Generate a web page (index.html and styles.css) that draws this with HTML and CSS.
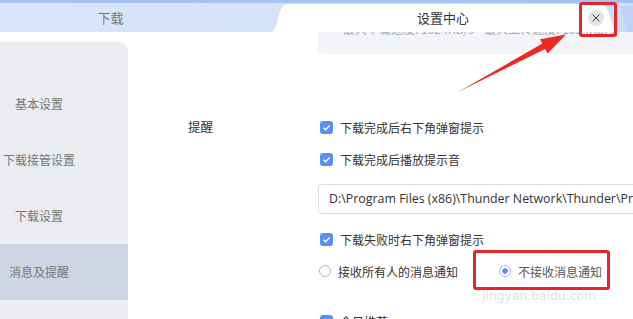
FILE: index.html
```html
<!DOCTYPE html>
<html>
<head lang="zh-CN">
    <meta charset="UTF-8">
    <title>设置中心</title>
    <link rel="stylesheet" href="styles.css">
</head>
<body>
<div class="tabs">
    <div class="tab">下载</div>
    <div class="tab tab-active">
        <span>设置中心</span>
        <i class="close">
            <svg width="8" height="8" viewBox="0 0 8 8"><path d="M0.5 0.5L7.5 7.5M7.5 0.5L0.5 7.5" stroke="#444" stroke-width="1"/></svg>
        </i>
    </div>
    <div class="tab-more"></div>
</div>
<div class="page">
    <ul class="side">
        <li>基本设置</li>
        <li>下载接管设置</li>
        <li>下载设置</li>
        <li class="selected">消息及提醒</li>
        <li></li>
    </ul>
    <div class="main">
        <div class="speed"><p>最大下载速度: 1024KB/s&nbsp;&nbsp;&nbsp;&nbsp;最大上传速度: 1024KB/s</p></div>
        <div class="section">
            <div class="label">提醒</div>
            <div class="opts">
                <div class="row"><i class="check"></i>下载完成后右下角弹窗提示</div>
                <div class="row"><i class="check"></i>下载完成后播放提示音</div>
                <div class="path">D:\Program Files (x86)\Thunder Network\Thunder\Program\sound\complete.wav</div>
                <div class="row"><i class="check"></i>下载失败时右下角弹窗提示</div>
                <div class="row">
                    <span class="radio-item"><i class="radio"></i>接收所有人的消息通知</span>
                    <span class="radio-item second"><i class="radio on"></i>不接收消息通知</span>
                </div>
                <div class="row gap"><i class="check"></i>今日推荐</div>
            </div>
        </div>
    </div>
</div>

<!-- 标注：红框和箭头 -->
<div class="mark mark-close"></div>
<div class="mark mark-radio"></div>
<svg class="arrow" width="633" height="319" viewBox="0 0 633 319">
    <polygon points="458,92 545.2,49 547.6,53.4 566,34.5 540,39.2 542.4,43.6" fill="#ec2a22"/>
</svg>
<div class="watermark">jingyan.baidu.com</div>
</body>
</html>
```

FILE: styles.css
```css
*{
    margin: 0;
    padding: 0;
}
html,body{
    width: 100%;
    height: 100%;
    overflow: hidden;
}
body{
    background: #fff;
    font-family: "Noto Sans CJK SC", "Noto Sans", sans-serif;
    font-size: 12px;
    color: #333;
}
.tabs{
    display: flex;
    height: 29px;
    padding-top: 3px;
    background: linear-gradient(90deg, #dae6fb, #c9def8);
    box-shadow: inset 0 3px 0 #a6c2f4;
}
.tab{
    width: 272px;
    line-height: 29px;
    text-align: center;
    color: #777;
    font-size: 13px;
}
.tab:first-child{
    text-indent: -50px;
}
.tab-active{
    position: relative;
    width: 345px;
    background: #fff;
    color: #333;
    clip-path: path('M0 29 C7 29 7 1 15 1 L330 1 C338 1 339 20 345 29 Z');
    text-indent: 0;
}
.close{
    position: absolute;
    right: 11px;
    top: 7px;
    width: 16px;
    height: 16px;
    border-radius: 50%;
    background: #e4e4e7;
    display: flex;
    align-items: center;
    justify-content: center;
}
.close svg{
    display: block;
}
.tab-more{
    width: 16px;
    margin-left: 2px;
    margin-top: 3px;
    background: #c0d2f8;
    clip-path: polygon(3px 0, 100% 0, 100% 100%, 10px 100%);
}
.page{
    display: flex;
    height: 287px;
}
.side{
    list-style: none;
    width: 128px;
    margin-top: 10px;
    padding-top: 34px;
    background: #ebecf0;
    border-top-right-radius: 10px;
    color: #777;
    font-size: 12px;
}
.side li{
    width: 78px;
    height: 56px;
    line-height: 56px;
    text-align: center;
    white-space: nowrap;
}
.side li.selected{
    width: 128px;
    background: #d0d5e6;
    text-indent: -50px;
}
.main{
    flex: 1;
    padding-left: 60px;
}
.speed{
    margin-left: 130px;
    height: 22px;
    overflow: hidden;
    background: #f3f4f7;
    border-bottom-left-radius: 6px;
}
.speed p{
    margin-top: -11px;
    padding-left: 25px;
    line-height: 16px;
    color: #aaa;
    font-size: 12px;
    white-space: nowrap;
}
.section{
    display: grid;
    grid-template-columns: 130px 1fr;
    margin-top: 57px;
}
.label{
    line-height: 32px;
    font-size: 12.5px;
    color: #333;
}
.row{
    display: flex;
    align-items: center;
    height: 32px;
    white-space: nowrap;
}
.row.gap{
    margin-top: 18px;
}
.check{
    width: 13px;
    height: 13px;
    margin: 0 7px 0 2px;
    border-radius: 3px;
    background: #5b8ff1 url("data:image/svg+xml,%3Csvg xmlns='http://www.w3.org/2000/svg' width='13' height='13'%3E%3Cpath d='M3.5 6.8L5.6 8.8L9.6 4.6' fill='none' stroke='white' stroke-width='1.4'/%3E%3C/svg%3E") no-repeat center;
}
.path{
    width: 420px;
    height: 30px;
    margin: 9px 0;
    padding-left: 10px;
    border: 1px solid #dcdcdc;
    border-radius: 4px;
    box-sizing: border-box;
    line-height: 28px;
    font-family: "Open Sans", "Noto Sans", sans-serif;
    font-size: 12.4px;
    color: #333;
    white-space: nowrap;
    overflow: hidden;
}
.radio-item{
    display: flex;
    align-items: center;
}
.radio-item.second{
    margin-left: 40px;
    color: #555;
}
.radio{
    width: 10px;
    height: 10px;
    margin: 0 7px 0 1px;
    border: 1px solid #b5b5b5;
    border-radius: 50%;
}
.radio.on{
    border-color: #9db8ee;
    background: radial-gradient(circle, #5b8ff1 0 2.5px, #fff 3px);
}
.mark{
    position: absolute;
    border: 3px solid #e3262a;
    border-radius: 3px;
    box-sizing: border-box;
}
.mark-close{
    left: 579px;
    top: 2px;
    width: 38px;
    height: 35px;
}
.mark-radio{
    left: 473px;
    top: 250px;
    width: 137px;
    height: 40px;
}
.arrow{
    position: absolute;
    left: 0;
    top: 0;
    pointer-events: none;
}
.watermark{
    position: absolute;
    left: 482px;
    top: 289px;
    font-family: "DejaVu Sans", sans-serif;
    font-size: 12px;
    color: #e2e2e2;
    letter-spacing: 0.2px;
}
```
